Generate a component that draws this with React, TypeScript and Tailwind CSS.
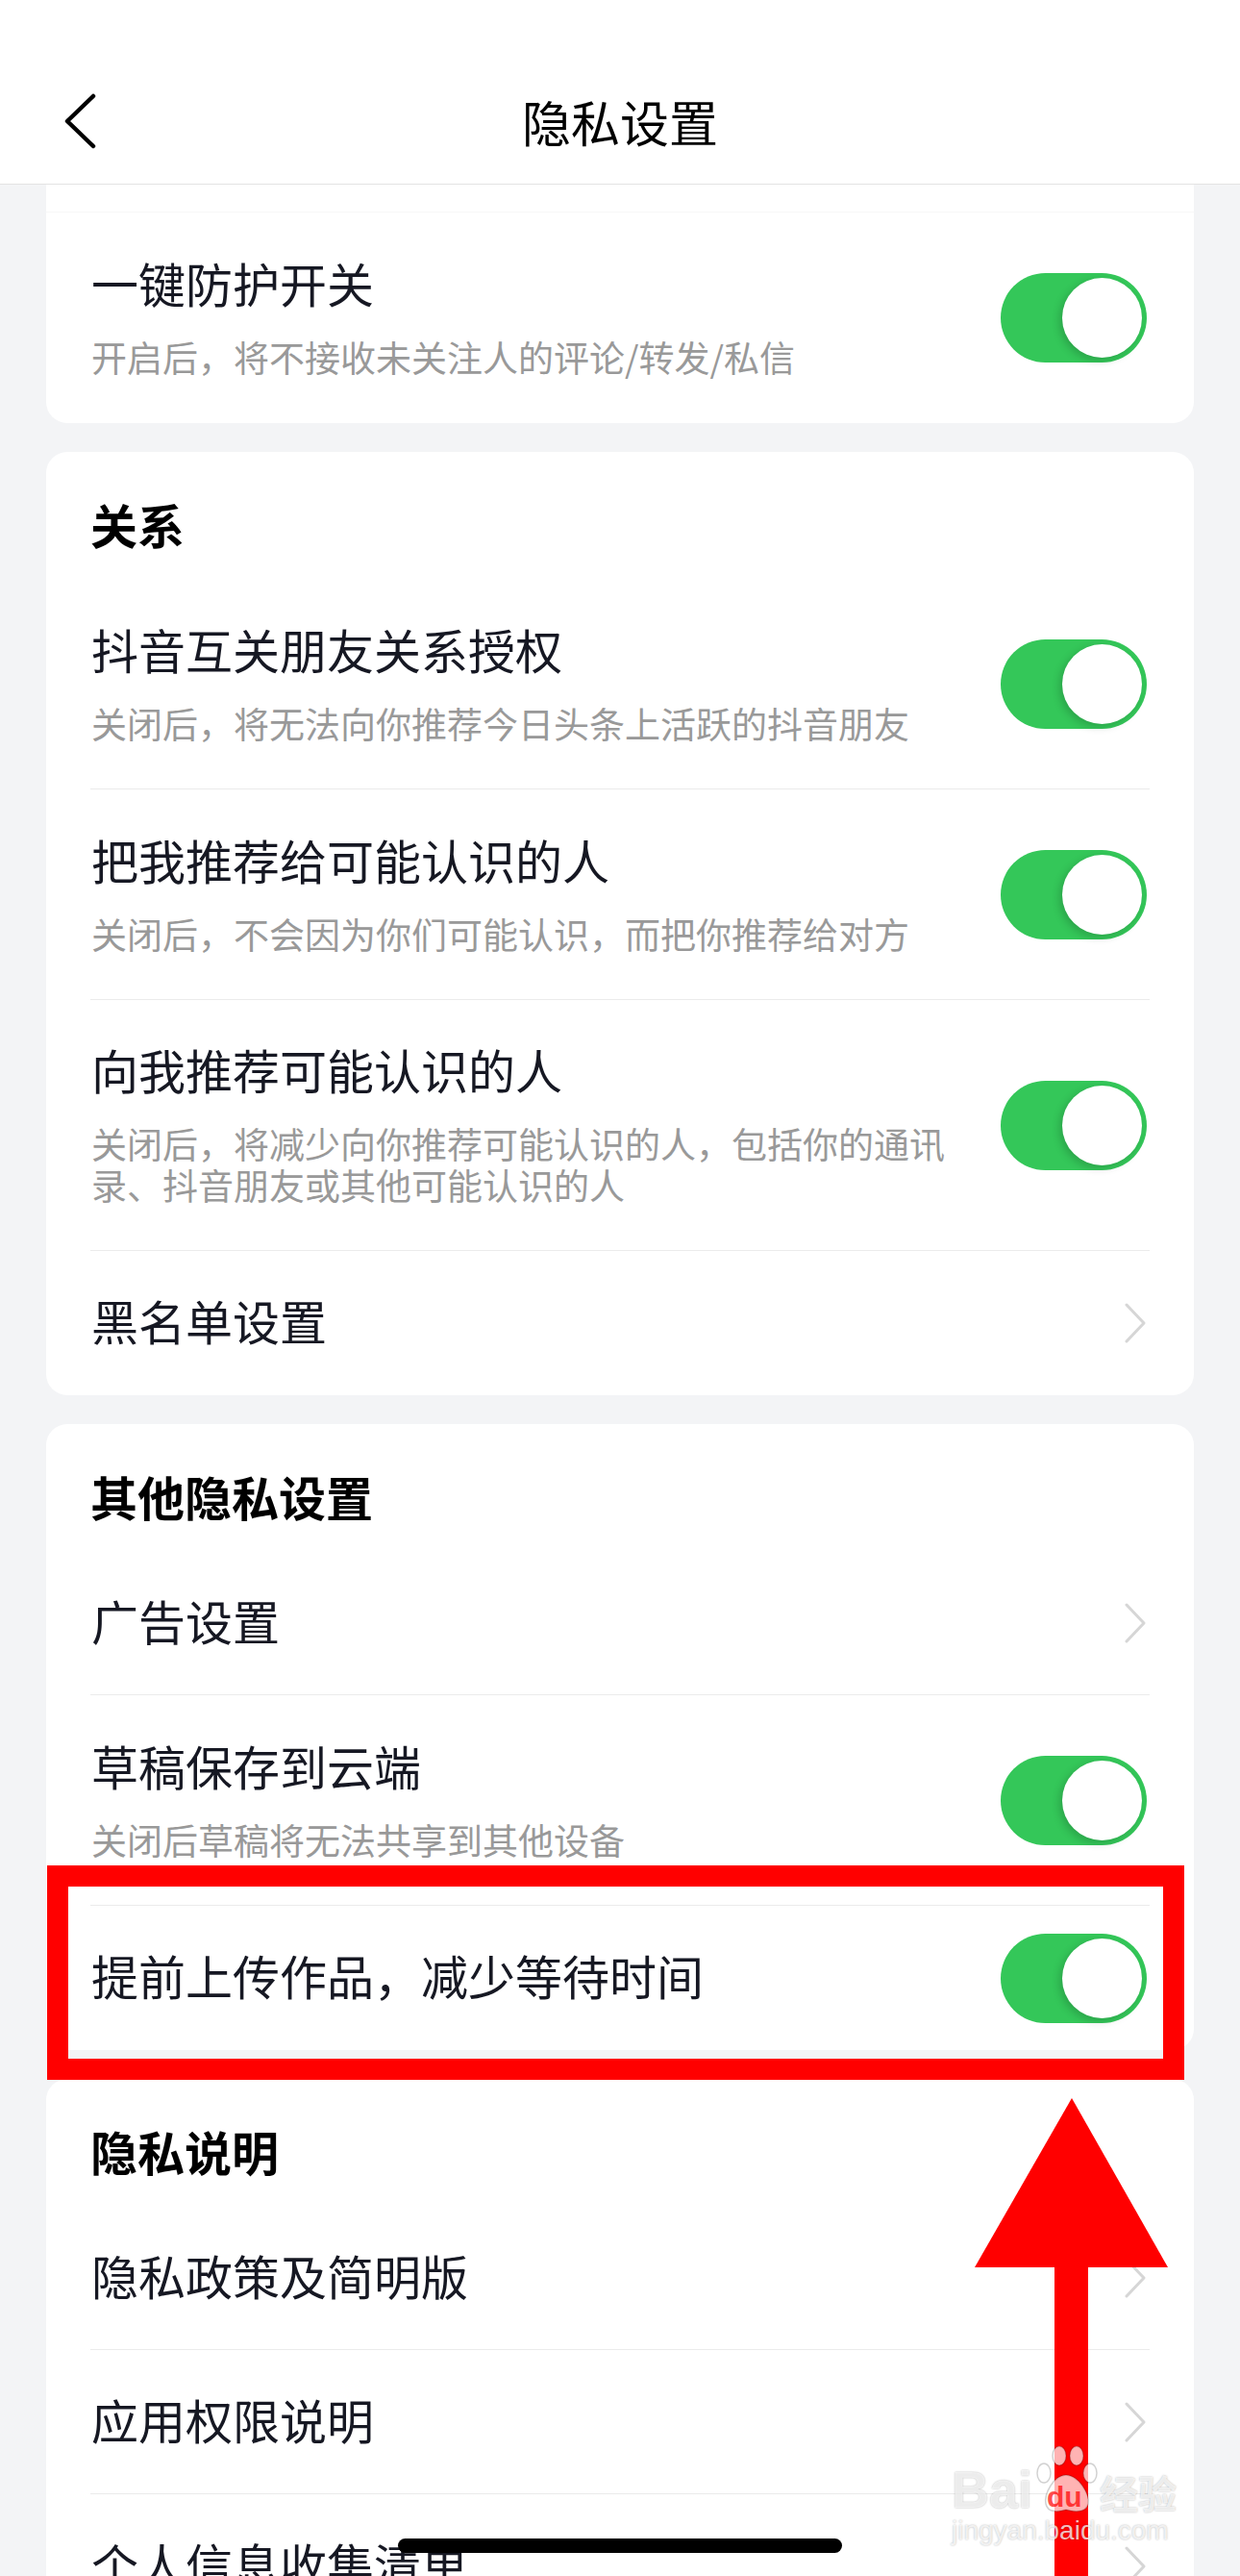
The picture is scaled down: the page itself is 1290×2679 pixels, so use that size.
import React from 'react';

const Toggle: React.FC = () => (
  <div className="relative w-[152px] h-[93px] shrink-0 mr-[3px] rounded-full bg-[#34c759]">
    <div className="absolute right-[5px] top-[5px] w-[83px] h-[83px] rounded-full bg-white shadow-[-3px_3px_8px_rgba(0,0,0,0.18)]" />
  </div>
);

const Chevron: React.FC = () => (
  <svg width="24" height="42" viewBox="0 0 24 42" className="shrink-0 mr-[3px]">
    <path d="M3 2 L21 21 L3 40" fill="none" stroke="#d6d6d6" strokeWidth="3" strokeLinecap="round" strokeLinejoin="round" />
  </svg>
);

const Heading: React.FC<{ children: React.ReactNode }> = ({ children }) => (
  <div className="h-[132px] pt-[54px]">
    <div className="text-[49px] leading-[42px] font-bold text-black">{children}</div>
  </div>
);

interface RowProps {
  title: string;
  sub?: string;
  right: 'toggle' | 'chevron';
  h: string;
  border?: boolean;
}

const Row: React.FC<RowProps> = ({ title, sub, right, h, border }) => (
  <div className={`${h} flex items-center justify-between ${border ? 'border-t border-[#ebebeb]' : ''}`}>
    <div className="flex-1 pr-[40px] pl-[1px] pb-[6px]">
      <div className="text-[49px] leading-[64px] text-[#161823]">{title}</div>
      {sub && <div className="mt-[24px] text-[37px] leading-[43px] text-[#999999]">{sub}</div>}
    </div>
    {right === 'toggle' ? <Toggle /> : <Chevron />}
  </div>
);

export default function App() {
  return (
    <div className="relative w-[1290px] h-[2679px] overflow-hidden bg-[#f3f4f6] font-['Noto_Sans_CJK_SC','Noto_Sans',sans-serif]">
      {/* header */}
      <div className="h-[192px] pt-[60px] bg-white border-b border-[#e3e3e3]">
        <div className="relative h-[131px] flex items-center justify-center">
          <svg width="34" height="58" viewBox="0 0 34 58" className="absolute left-[66px] top-[37px]">
            <path d="M31 3 L4 29 L31 55" fill="none" stroke="#000" strokeWidth="4.5" strokeLinecap="round" strokeLinejoin="round" />
          </svg>
          <div className="text-[51px] leading-[60px] text-black">隐私设置</div>
        </div>
      </div>

      <div className="px-[48px] flex flex-col gap-[30px]">
        <div className="bg-white rounded-b-[22px] pt-[28px]">
          <div className="border-t border-[#f7f7f7] px-[46px]">
            <Row title="一键防护开关" sub="开启后，将不接收未关注人的评论/转发/私信" right="toggle" h="h-[219px]" />
          </div>
        </div>

        <div className="bg-white rounded-[22px] px-[46px]">
          <Heading>关系</Heading>
          <Row title="抖音互关朋友关系授权" sub="关闭后，将无法向你推荐今日头条上活跃的抖音朋友" right="toggle" h="h-[218px]" />
          <Row title="把我推荐给可能认识的人" sub="关闭后，不会因为你们可能认识，而把你推荐给对方" right="toggle" h="h-[219px]" border />
          <Row title="向我推荐可能认识的人" sub="关闭后，将减少向你推荐可能认识的人，包括你的通讯录、抖音朋友或其他可能认识的人" right="toggle" h="h-[261px]" border />
          <Row title="黑名单设置" right="chevron" h="h-[151px]" border />
        </div>

        <div className="bg-white rounded-[22px] px-[46px]">
          <Heading>其他隐私设置</Heading>
          <Row title="广告设置" right="chevron" h="h-[149px]" />
          <Row title="草稿保存到云端" sub="关闭后草稿将无法共享到其他设备" right="toggle" h="h-[219px]" border />
          <Row title="提前上传作品，减少等待时间" right="toggle" h="h-[151px]" border />
        </div>

        <div className="bg-white rounded-[22px] px-[46px]">
          <Heading>隐私说明</Heading>
          <Row title="隐私政策及简明版" right="chevron" h="h-[149px]" />
          <Row title="应用权限说明" right="chevron" h="h-[150px]" border />
          <Row title="个人信息收集清单" right="chevron" h="h-[150px]" border />
        </div>
      </div>

      {/* annotation box */}
      <div className="absolute left-[49px] top-[1940px] w-[1183px] h-[223px] border-[22px] border-[#ff0000]" />

      {/* annotation arrow */}
      <svg width="210" height="501" viewBox="0 0 210 501" className="absolute left-[1010px] top-[2178px]">
        <polygon points="105,4 4,180 205,180" fill="#ff0000" />
        <rect x="87" y="179" width="35" height="330" fill="#ff0000" />
      </svg>

      {/* watermark */}
      <div className="absolute left-[990px] top-[2540px] w-[240px] text-white/75 [text-shadow:0_0_2px_rgba(0,0,0,0.3)]">
        <div className="flex items-end h-[76px]">
          <span className="font-['Liberation_Sans',sans-serif] font-bold text-[54px] leading-[54px]">Bai</span>
          <div className="relative w-[70px] h-[72px] shrink-0">
            <svg width="70" height="72" viewBox="0 0 70 72" className="absolute left-0 top-0">
              <g fill="rgba(255,255,255,0.7)" stroke="rgba(0,0,0,0.18)" strokeWidth="1.5">
                <ellipse cx="12" cy="28" rx="7" ry="10" />
                <ellipse cx="28" cy="10" rx="7" ry="10" />
                <ellipse cx="46" cy="10" rx="7" ry="10" />
                <ellipse cx="60" cy="28" rx="7" ry="10" />
                <path d="M35 30 C22 30 12 50 14 60 C16 70 28 68 35 66 C42 68 56 70 58 60 C60 50 48 30 35 30 Z" />
              </g>
            </svg>
            <span className="absolute left-[15px] top-[38px] font-['Liberation_Sans',sans-serif] font-bold text-[30px] leading-[30px] text-[#ff0000]/70 [text-shadow:none]">du</span>
          </div>
          <span className="text-[40px] leading-[48px] font-bold">经验</span>
        </div>
        <div className="font-['Liberation_Sans_Narrow','Liberation_Sans',sans-serif] text-[28px] leading-[32px]">jingyan.baidu.com</div>
      </div>

      {/* home indicator */}
      <div className="absolute left-[414px] top-[2640px] w-[462px] h-[15px] rounded-full bg-black" />
    </div>
  );
}
